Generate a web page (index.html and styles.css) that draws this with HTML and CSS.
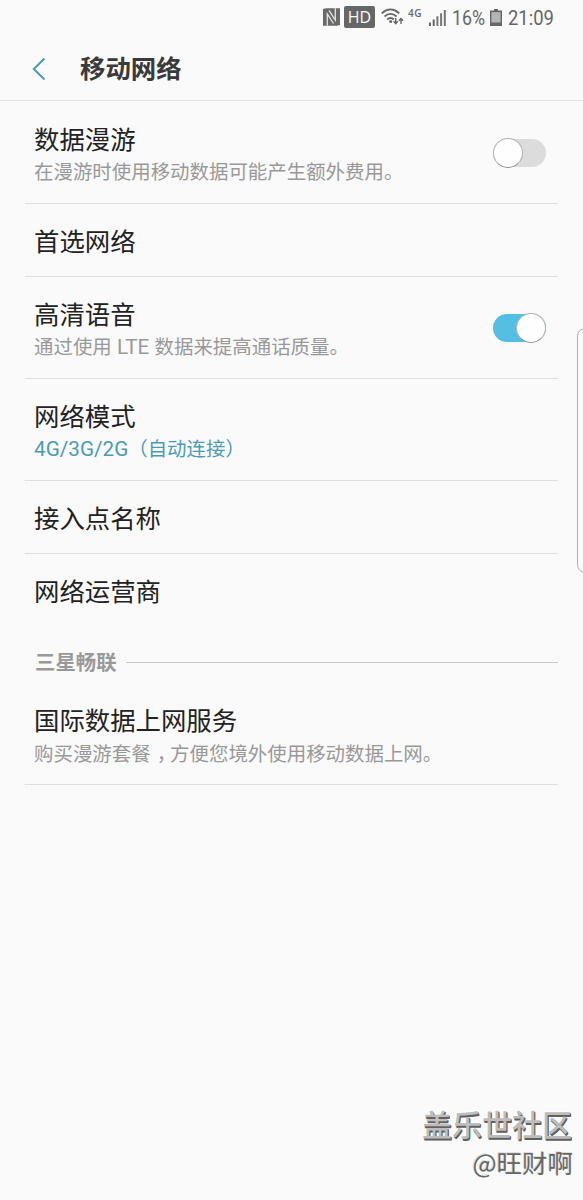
FILE: index.html
```html
<!DOCTYPE html>
<html lang="zh-CN">
<head>
<meta charset="utf-8">
<title>移动网络</title>
<link rel="stylesheet" href="styles.css">
</head>
<body>
<div class="screen">
  <div class="status">
    <svg class="nfc" width="17" height="18" viewBox="0 0 17 18">
      <path d="M0 1L3 .3H17V17L14 17.7H0z" fill="#696969"/>
      <path d="M4.3 17.7V6L10.5 15.5M12.3 .3V12L6 2.3" fill="none" stroke="#e4e4e4" stroke-width="1.3"/>
    </svg>
    <span class="hd">HD</span>
    <svg class="wifi" width="23" height="18" viewBox="0 0 23 18">
      <g fill="none" stroke="#666" stroke-width="1.8">
        <path d="M.7 5.3Q9.5 -2.5 18.3 5.3"/>
        <path d="M3.5 8.5Q9.5 3.2 15.6 8.5"/>
        <path d="M6.2 11.5Q9.5 8.4 12.8 11.5"/>
      </g>
      <circle cx="9.7" cy="13.6" r="1.5" fill="#666"/>
      <path d="M14.7 10V15M12.6 13.3L14.7 15.6L16.8 13.3M20 16V11M17.9 12.8L20 10.5L22.1 12.8" fill="none" stroke="#666" stroke-width="1.4"/>
    </svg>
    <span class="lte">4G</span>
    <svg class="signal" width="17" height="16" viewBox="0 0 17 16">
      <path d="M0 12.5h2V16H0zM3.7 9.5h2V16h-2z" fill="#666"/>
      <path d="M7.4 6.3h2V16h-2zM11.1 3.2h2V16h-2zM14.8 0h2V16h-2z" fill="#777"/>
    </svg>
    <span class="percent">16%</span>
    <svg class="battery" width="12" height="17" viewBox="0 0 12 17">
      <path d="M4 0h4v1.5h4V17H0V1.5h4z" fill="#666"/>
      <path d="M1.4 3.2h9.2v10.3H1.4z" fill="#b5b5b5"/>
    </svg>
    <span class="clock">21:09</span>
  </div>

  <header class="header">
    <svg class="back" width="14" height="24" viewBox="0 0 14 24"><path d="M12.5 1.5L1.8 12L12.5 22.5" fill="none" stroke="#4b9bb3" stroke-width="2"/></svg>
    <h1 class="heading">移动网络</h1>
  </header>

  <main class="list">
    <div class="row tall first">
      <div class="text"><div class="title">数据漫游</div><div class="sub">在漫游时使用移动数据可能产生额外费用。</div></div>
      <div class="switch"><span class="knob"></span></div>
    </div>
    <div class="row"><div class="title">首选网络</div></div>
    <div class="row tall">
      <div class="text"><div class="title">高清语音</div><div class="sub tight">通过使用<span class="latin"> LTE </span>数据来提高通话质量。</div></div>
      <div class="switch on"><span class="knob"></span></div>
    </div>
    <div class="row tall">
      <div class="text"><div class="title">网络模式</div><div class="sub tight accent"><span class="latin">4G/3G/2G</span>（自动连接）</div></div>
    </div>
    <div class="row"><div class="title">接入点名称</div></div>
    <div class="row last"><div class="title">网络运营商</div></div>
    <div class="section"><span>三星畅联</span><i class="rule"></i></div>
    <div class="row tall service">
      <div class="text"><div class="title">国际数据上网服务</div><div class="sub tight">购买漫游套餐<span class="comma">，</span>方便您境外使用移动数据上网。</div></div>
    </div>
  </main>

  <div class="edge"></div>
  <div class="mark">
    <div class="mark-site">盖乐世社区</div>
    <div class="mark-user">@旺财啊</div>
  </div>
</div>
</body>
</html>
```
FILE: styles.css
```css
* { box-sizing: border-box; }
body {
  margin: 0;
  background: #fafafa;
  font-family: Roboto, "Noto Sans CJK SC", sans-serif;
}
.screen {
  position: relative;
  width: 583px;
  height: 1200px;
  overflow: hidden;
  background: #fafafa;
}
.status {
  display: flex;
  align-items: flex-start;
  height: 37px;
  padding-left: 323px;
  color: #666;
  white-space: nowrap;
}
.status > * { flex: none; }
.nfc { margin-top: 8px; }
.hd {
  width: 31px;
  height: 22px;
  margin: 6px 1px 0 4px;
  border-radius: 2px;
  background: #666;
  color: #fafafa;
  font: 16px/22px "Open Sans", sans-serif;
  text-align: center;
}
.wifi { margin: 8px 0 0 5px; }
.lte {
  width: 16px;
  margin: 7px 0 0 4px;
  font: 600 10px/12px "Open Sans", sans-serif;
  letter-spacing: .5px;
}
.signal { margin: 10px 0 0 5px; }
.percent, .clock {
  font-size: 20px;
  line-height: 24px;
  margin-top: 6px;
  transform-origin: left center;
}
.percent { width: 33px; margin-left: 6px; transform: scaleX(.89); }
.battery { margin: 9px 0 0 5px; }
.clock { margin-left: 6px; transform: scaleX(.92); }
.header {
  display: flex;
  align-items: center;
  height: 64px;
  padding-left: 32px;
  border-bottom: 1px solid #e3e3e3;
}
.back { flex: none; }
.heading {
  margin: 0 0 0 34px;
  font-size: 25.4px;
  line-height: 36px;
  font-weight: 700;
  color: #3a3a3a;
}
.list { padding: 0 25px; }
.row {
  display: flex;
  align-items: flex-start;
  justify-content: space-between;
  height: 73px;
  padding: 22px 12px 0 9px;
  border-bottom: 1px solid #dfdfdf;
}
.row.tall { height: 102px; }
.row.first { height: 103px; padding-top: 23px; }
.row.last { border-bottom-color: transparent; }
.row.service { height: 103px; padding-top: 23px; }
.title {
  font-size: 25.4px;
  line-height: 32px;
  color: #222;
}
.sub {
  height: 32px;
  margin-top: 1px;
  font-size: 19.45px;
  line-height: 32px;
  color: #999;
  white-space: nowrap;
}
.sub.tight { margin-top: 0; }
.sub.accent { color: #4b9bb3; }
.latin { font-size: 20.7px; }
.comma {
  display: inline-block;
  width: 1em;
  padding-left: 6px;
  font-family: "Noto Sans CJK SC", sans-serif;
  font-feature-settings: "halt";
}
.switch {
  display: flex;
  align-items: center;
  flex: none;
  width: 53px;
  height: 28px;
  margin-top: 15px;
  border-radius: 14px;
  background: #dcdcdc;
}
.switch.on { justify-content: flex-end; background: #54bfe3; }
.knob {
  flex: none;
  width: 30px;
  height: 30px;
  border-radius: 50%;
  border: 1px solid #b0b0b0;
  border-bottom-color: #8c8c8c;
  background: #fefefe;
}
.section {
  display: flex;
  align-items: center;
  gap: 9px;
  height: 55px;
  padding: 15px 0 0 10px;
  font-size: 20.4px;
  line-height: 28px;
  font-weight: 700;
  color: #999;
}
.section span { padding-top: 1px; margin-bottom: -1px; }
.rule { flex: 1; height: 1px; background: #c8c8c8; }
.edge {
  position: absolute;
  left: 577px;
  top: 328px;
  width: 20px;
  height: 245px;
  border: 1px solid #b0b0b0;
  border-radius: 8px;
}
.mark {
  position: absolute;
  right: 11px;
  top: 1103px;
  text-align: right;
  font-family: "Noto Sans CJK SC", sans-serif;
}
.mark-site {
  font-size: 30px;
  line-height: 40px;
  font-weight: 500;
  color: #bdbdbd;
  text-shadow: 1px 1px 0 #606060, 1px 2px 0 #606060, -1px -1px 0 #fff;
}
.mark-user {
  margin-right: -1px;
  font-size: 25.5px;
  line-height: 38px;
  color: #666;
  text-shadow: -1px -1px 0 #ddd;
}
```
